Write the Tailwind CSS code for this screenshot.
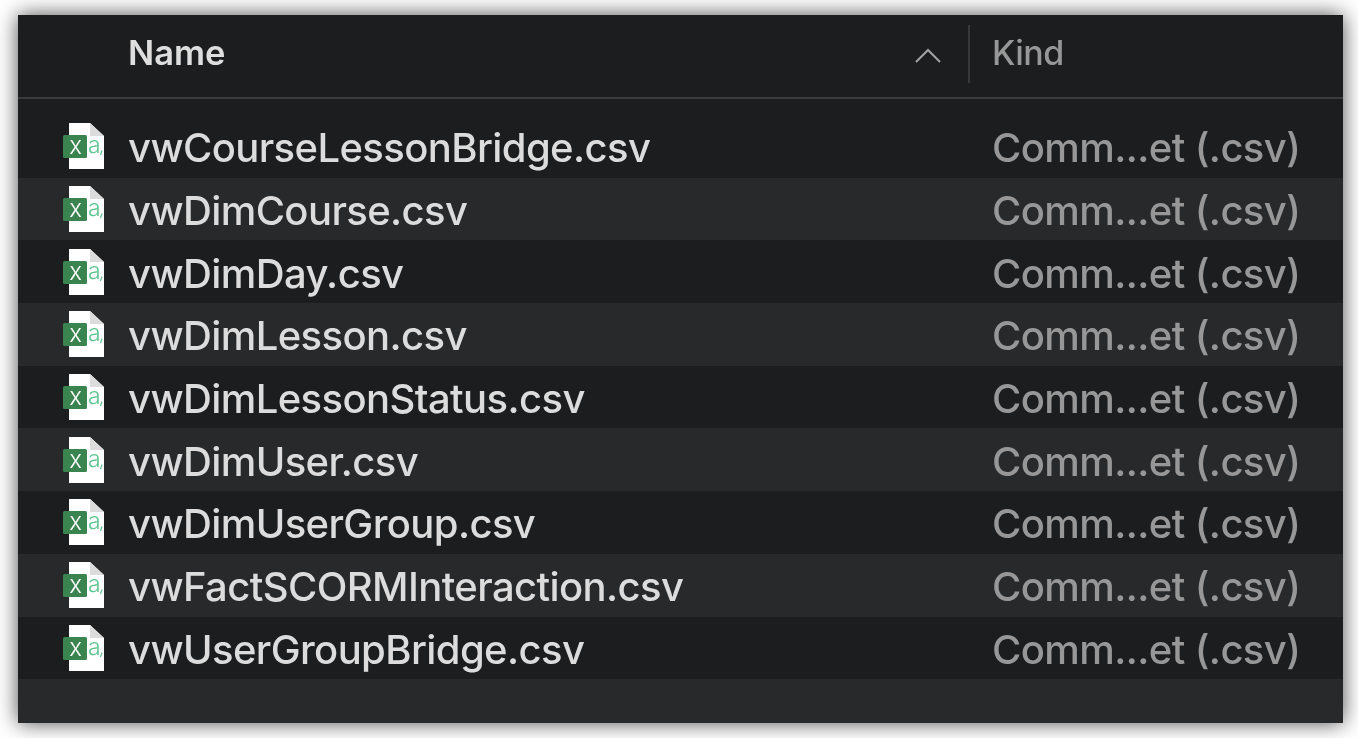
<!DOCTYPE html>
<html lang="en">
<head>
    <meta charset="UTF-8" />
    <title>Files</title>
    <script src="https://cdn.jsdelivr.net/npm/@tailwindcss/browser@4"></script>
</head>
<body class="bg-white h-[738px] overflow-hidden font-['Inter',sans-serif]">
    <!-- Spreadsheet icon, reused on each row -->
    <svg class="hidden">
        <symbol id="csv" viewBox="0 0 42 47">
            <path d="M6 0H27L41 13V46H6Z" fill="#fff"/>
            <path d="M27 0L41 13H27Z" fill="#dcdcdc"/>
            <text x="25" y="29.5" font-family="Inter, sans-serif" font-size="23" font-weight="300" letter-spacing="0" fill="#5cc48f">a</text>
            <path d="M39 27.5L37.5 32" stroke="#5cc48f" stroke-width="1.2" fill="none"/>
            <rect x="0" y="12" width="24" height="23" rx="1.5" fill="#3a8450"/>
            <text x="12.5" y="30.5" text-anchor="middle" font-family="Inter, sans-serif" font-size="24" font-weight="300" letter-spacing="0" fill="#fff">x</text>
        </symbol>
    </svg>

    <div class="pt-[15px] pl-[18px]">
        <div class="w-[1325px] h-[708px] bg-[#1c1d1f] overflow-hidden shadow-[0_0_20px_rgba(0,0,0,0.7)] blur-[0.6px]">
            <!-- Header -->
            <div class="h-[84px] pb-[4px] flex items-center border-b-2 border-[#3a3b3d]">
                <div class="w-[950px] pl-[110px] flex items-center justify-between">
                    <span class="text-[#dedede] text-[34.5px] font-semibold -mt-[2px]">Name</span>
                    <svg class="w-[26px] h-[15px] mr-[27px] mt-[2px]" viewBox="0 0 26 15" fill="none" stroke="#a3a3a3" stroke-width="2"><path d="M1 14L13 2L25 14"/></svg>
                </div>
                <div class="w-[2px] h-[58px] bg-[#37383a]"></div>
                <span class="pl-[22px] text-[#979797] text-[34px] -mt-[4px] font-[450] tracking-[-0.5px]">Kind</span>
            </div>

            <!-- Rows -->
            <div class="pt-[16px] text-[40px] tracking-[-0.6px] font-[450]">
                <div class="h-[62.7px] flex items-center">
                    <svg class="w-[42px] h-[47px] ml-[45px] mr-[23px] mt-[1px]"><use href="#csv"/></svg>
                    <span class="w-[864px] pt-[4px] text-[#dcdcdc]">vwCourseLessonBridge.csv</span>
                    <span class="pt-[4px] text-[#979797]">Comm...et (.csv)</span>
                </div>
                <div class="h-[62.7px] flex items-center bg-[#28292b]">
                    <svg class="w-[42px] h-[47px] ml-[45px] mr-[23px] mt-[1px]"><use href="#csv"/></svg>
                    <span class="w-[864px] pt-[4px] text-[#dcdcdc]">vwDimCourse.csv</span>
                    <span class="pt-[4px] text-[#979797]">Comm...et (.csv)</span>
                </div>
                <div class="h-[62.7px] flex items-center">
                    <svg class="w-[42px] h-[47px] ml-[45px] mr-[23px] mt-[1px]"><use href="#csv"/></svg>
                    <span class="w-[864px] pt-[4px] text-[#dcdcdc]">vwDimDay.csv</span>
                    <span class="pt-[4px] text-[#979797]">Comm...et (.csv)</span>
                </div>
                <div class="h-[62.7px] flex items-center bg-[#28292b]">
                    <svg class="w-[42px] h-[47px] ml-[45px] mr-[23px] mt-[1px]"><use href="#csv"/></svg>
                    <span class="w-[864px] pt-[4px] text-[#dcdcdc]">vwDimLesson.csv</span>
                    <span class="pt-[4px] text-[#979797]">Comm...et (.csv)</span>
                </div>
                <div class="h-[62.7px] flex items-center">
                    <svg class="w-[42px] h-[47px] ml-[45px] mr-[23px] mt-[1px]"><use href="#csv"/></svg>
                    <span class="w-[864px] pt-[4px] text-[#dcdcdc]">vwDimLessonStatus.csv</span>
                    <span class="pt-[4px] text-[#979797]">Comm...et (.csv)</span>
                </div>
                <div class="h-[62.7px] flex items-center bg-[#28292b]">
                    <svg class="w-[42px] h-[47px] ml-[45px] mr-[23px] mt-[1px]"><use href="#csv"/></svg>
                    <span class="w-[864px] pt-[4px] text-[#dcdcdc]">vwDimUser.csv</span>
                    <span class="pt-[4px] text-[#979797]">Comm...et (.csv)</span>
                </div>
                <div class="h-[62.7px] flex items-center">
                    <svg class="w-[42px] h-[47px] ml-[45px] mr-[23px] mt-[1px]"><use href="#csv"/></svg>
                    <span class="w-[864px] pt-[4px] text-[#dcdcdc]">vwDimUserGroup.csv</span>
                    <span class="pt-[4px] text-[#979797]">Comm...et (.csv)</span>
                </div>
                <div class="h-[62.7px] flex items-center bg-[#28292b]">
                    <svg class="w-[42px] h-[47px] ml-[45px] mr-[23px] mt-[1px]"><use href="#csv"/></svg>
                    <span class="w-[864px] pt-[4px] text-[#dcdcdc]">vwFactSCORMInteraction.csv</span>
                    <span class="pt-[4px] text-[#979797]">Comm...et (.csv)</span>
                </div>
                <div class="h-[62.7px] flex items-center">
                    <svg class="w-[42px] h-[47px] ml-[45px] mr-[23px] mt-[1px]"><use href="#csv"/></svg>
                    <span class="w-[864px] pt-[4px] text-[#dcdcdc]">vwUserGroupBridge.csv</span>
                    <span class="pt-[4px] text-[#979797]">Comm...et (.csv)</span>
                </div>
                <div class="h-[46px] bg-[#28292b]"></div>
            </div>
        </div>
    </div>
</body>
</html>
